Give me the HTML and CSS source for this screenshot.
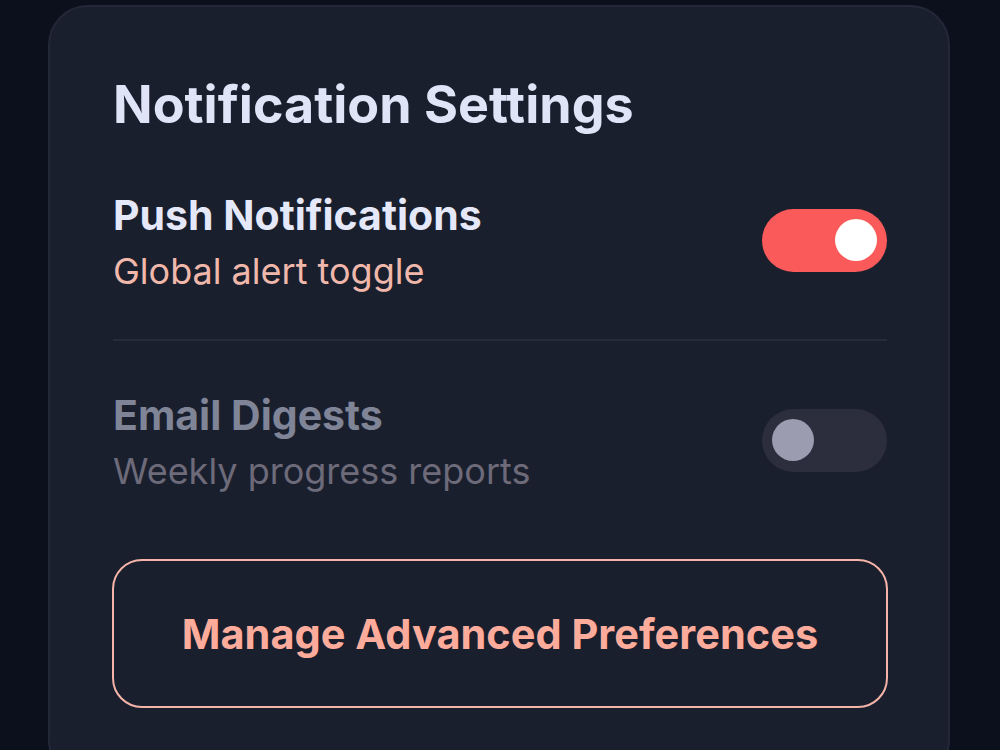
FILE: index.html
```html
<!DOCTYPE html>
<html lang="en">
<head>
    <meta charset="UTF-8">
    <meta name="viewport" content="width=device-width, initial-scale=1.0">
    <title>Notification Settings</title>
    <link rel="stylesheet" href="styles.css">
</head>
<body>
    <div class="card">
        <h1>Notification Settings</h1>

        <div class="setting">
            <div class="setting-text">
                <div class="setting-title">Push Notifications</div>
                <div class="setting-desc">Global alert toggle</div>
            </div>
            <div class="toggle on"><span class="knob"></span></div>
        </div>

        <div class="divider"></div>

        <div class="setting muted">
            <div class="setting-text">
                <div class="setting-title">Email Digests</div>
                <div class="setting-desc">Weekly progress reports</div>
            </div>
            <div class="toggle"><span class="knob"></span></div>
        </div>

        <button class="btn">Manage Advanced Preferences</button>
    </div>
</body>
</html>
```

FILE: styles.css
```css
* {
    margin: 0;
    padding: 0;
    box-sizing: border-box;
}

body {
    font-family: Inter, 'Noto Sans', sans-serif;
    background: #0b101c;
    height: 750px;
    overflow: hidden;
    padding: 5px 50px 0 48px;
}

.card {
    background: #1a1f2e;
    border: 2px solid #232838;
    border-radius: 40px;
    padding: 68px 61px 0 63px;
    height: 775px;
}

h1 {
    color: #dfe4f7;
    font-size: 52px;
    font-weight: 700;
    line-height: 60px;
    margin-bottom: 55px;
}

.setting {
    display: flex;
    justify-content: space-between;
    align-items: center;
}

.setting-title {
    color: #e4e8f8;
    font-size: 41px;
    font-weight: 700;
    line-height: 50px;
}

.setting-desc {
    color: #f0b8ab;
    font-size: 36px;
    line-height: 50px;
    margin-top: 6px;
}

.setting.muted .setting-title {
    color: #7f8497;
}

.setting.muted .setting-desc {
    color: #6d6a79;
}

.toggle {
    width: 125px;
    height: 63px;
    margin-bottom: 6px;
    border-radius: 32px;
    background: #2d2e3d;
    padding: 0 10px;
    display: flex;
    align-items: center;
}

.toggle.on {
    background: #fa5a5a;
    justify-content: flex-end;
}

.knob {
    width: 42px;
    height: 42px;
    border-radius: 50%;
    background: #9b9cb0;
}

.toggle.on .knob {
    background: #ffffff;
}

.divider {
    height: 2px;
    background: #262b3a;
    margin: 43px 0 49px;
}

.btn {
    display: block;
    width: calc(100% + 2px);
    height: 149px;
    margin: 63px 0 0 -1px;
    background: transparent;
    border: 2px solid #f6b4a8;
    border-radius: 30px;
    color: #fdac9c;
    font-family: inherit;
    font-size: 41.5px;
    font-weight: 700;
}
```
